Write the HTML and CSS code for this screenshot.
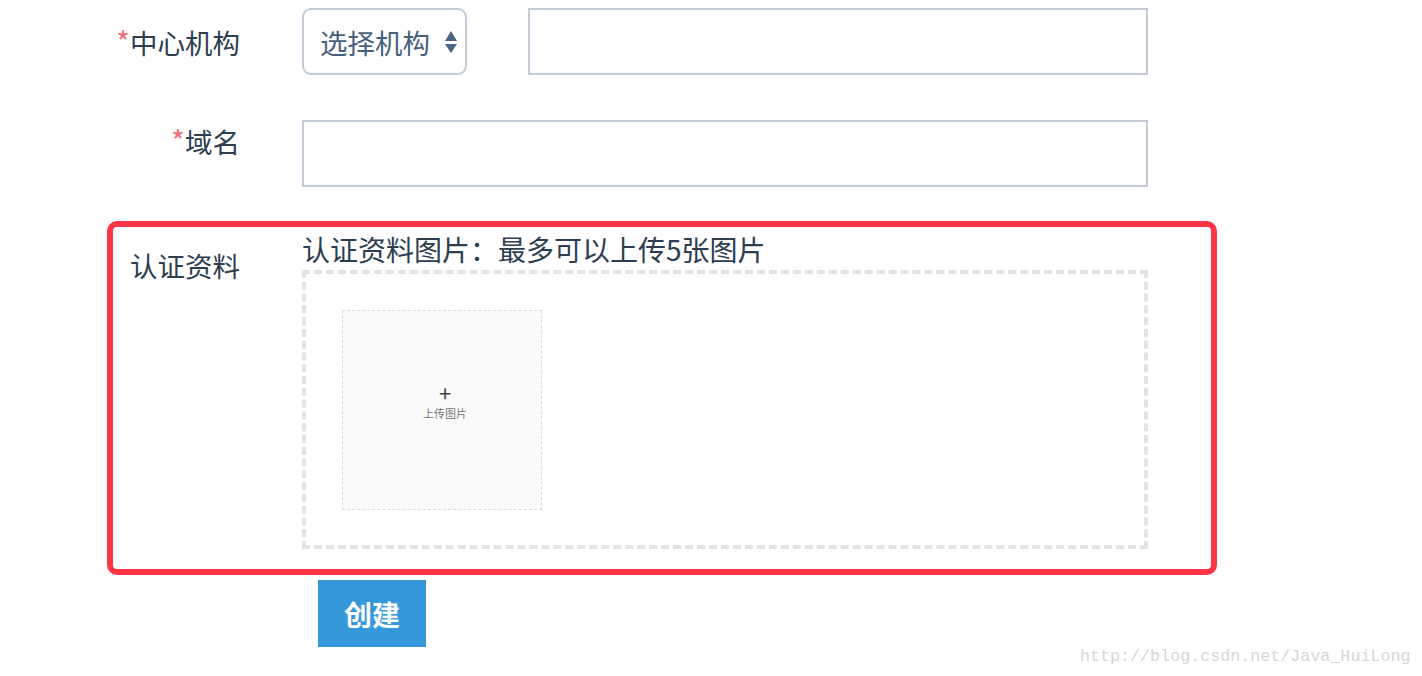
FILE: index.html
```html
<!DOCTYPE html>
<html lang="zh">
<head>
<meta charset="utf-8">
<link rel="stylesheet" href="styles.css">
</head>
<body>
<form class="form">
  <div class="row row-center">
    <label class="label"><span class="req">*</span>中心机构</label>
    <div class="control control-inline">
      <div class="select">
        <span>选择机构</span>
        <svg class="arrows" width="14" height="24" viewBox="0 0 14 24"><path d="M7 1 L13 11 L1 11 Z" fill="#4a6585"/><path d="M1 14 L13 14 L7 23 Z" fill="#4a6585"/></svg>
      </div>
      <div class="input input-side"></div>
    </div>
  </div>
  <div class="row row-domain">
    <label class="label"><span class="req">*</span>域名</label>
    <div class="control">
      <div class="input input-full"></div>
    </div>
  </div>
  <div class="highlight">
    <div class="row">
      <label class="label label-cert">认证资料</label>
      <div class="control">
        <div class="heading">认证资料图片：最多可以上传5张图片</div>
        <div class="dropzone">
          <div class="upload">
            <div class="plus">+</div>
            <div class="upload-text">上传图片</div>
          </div>
        </div>
      </div>
    </div>
  </div>
  <div class="actions">
    <button type="button" class="btn">创建</button>
  </div>
</form>
<div class="watermark">http://blog.csdn.net/Java_HuiLong</div>
</body>
</html>
```
FILE: styles.css
```css
html, body {
  margin: 0;
  padding: 0;
  background: #fff;
}
body {
  font-family: "Noto Sans CJK SC", "Noto Sans", sans-serif;
  color: #2c3e50;
  width: 1422px;
  height: 676px;
  position: relative;
  overflow: hidden;
}
.form {
  padding-top: 8px;
}
.row {
  display: flex;
  align-items: flex-start;
}
.row-center {
  align-items: center;
}
.label {
  width: 240px;
  flex: none;
  text-align: right;
  font-size: 27.5px;
  line-height: 40px;
  color: #2c3e50;
}
.req {
  color: #f0707a;
  font-size: 30px;
}
.control {
  margin-left: 62px;
  width: 846px;
}
.control-inline {
  display: flex;
  align-items: center;
  gap: 61px;
}
.select {
  box-sizing: border-box;
  width: 165px;
  height: 67px;
  border: 2px solid #c3cbd7;
  border-radius: 9px;
  display: flex;
  align-items: center;
  justify-content: space-between;
  padding: 0 7px 0 16px;
  font-size: 27.5px;
  color: #46607e;
}
.arrows {
  display: block;
}
.input {
  box-sizing: border-box;
  height: 67px;
  border: 2px solid #c3cbd7;
  background: #fff;
}
.input-side {
  width: 620px;
}
.input-full {
  width: 846px;
}
.row-domain {
  margin-top: 45px;
}
.highlight {
  box-sizing: border-box;
  margin-top: 34px;
  margin-left: 107px;
  width: 1110px;
  border: 6px solid #fe3547;
  border-radius: 10px;
  padding: 7px 0 20px 0;
}
.label-cert {
  width: 127px;
  padding-top: 11px;
}
.heading {
  font-size: 28px;
  line-height: 30px;
  margin-bottom: 6px;
  color: #2c3e50;
}
.dropzone {
  box-sizing: border-box;
  width: 846px;
  height: 279px;
  border: 4px dashed #e3e3e3;
  padding: 36px;
}
.upload {
  box-sizing: border-box;
  width: 200px;
  height: 200px;
  border: 1px dashed #dcdcdc;
  background: #fafafa;
  display: flex;
  flex-direction: column;
  align-items: center;
  justify-content: center;
  color: #666;
  padding-left: 6px;
}
.plus {
  font-size: 22px;
  line-height: 20px;
  color: #444;
  margin-top: -18px;
}
.upload-text {
  font-size: 11px;
  line-height: 14px;
  margin-top: 4px;
  color: #777;
}
.actions {
  padding-left: 318px;
  margin-top: 5px;
}
.btn {
  width: 108px;
  height: 67px;
  border: none;
  background: #3598db;
  color: #fff;
  font-family: "Noto Sans CJK SC", sans-serif;
  font-size: 28px;
  font-weight: 700;
  padding: 0;
}
.watermark {
  position: absolute;
  left: 1080px;
  top: 647px;
  font-family: "Liberation Mono", monospace;
  font-size: 16.7px;
  color: #d6d6d6;
}
```
